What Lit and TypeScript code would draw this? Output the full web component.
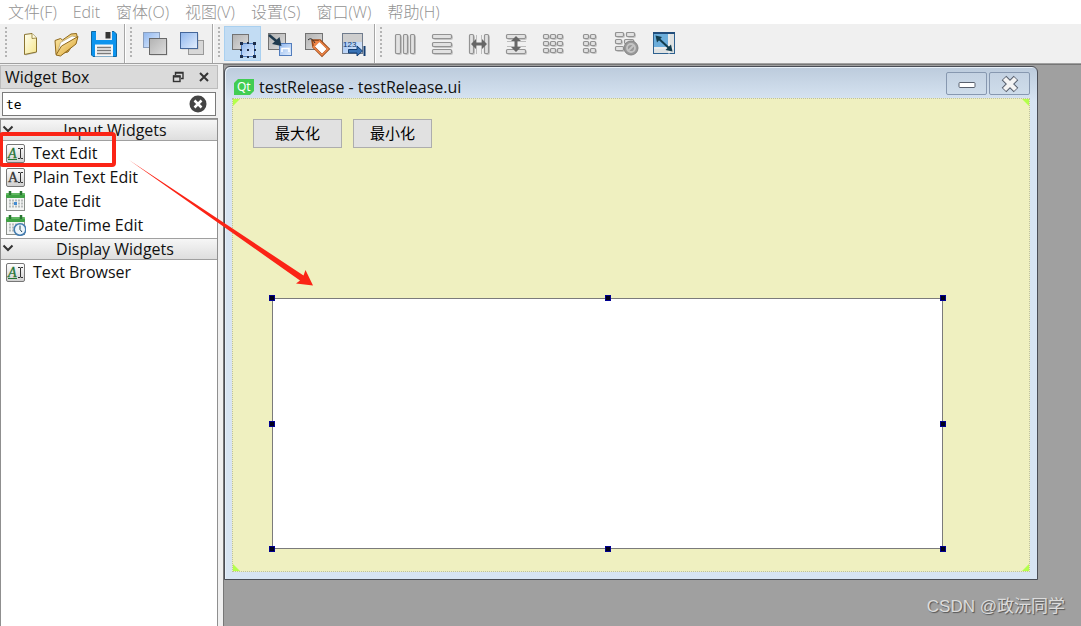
import { LitElement, html, svg, css, TemplateResult } from "lit";
import { customElement, property } from "lit/decorators.js";

const gradients = svg`<defs>
  <linearGradient id="gray" x2="1" y2="1"><stop stop-color="#b2b2b2"/><stop offset="1" stop-color="#dedede"/></linearGradient>
  <linearGradient id="blue" x2="1" y2="1"><stop stop-color="#8fb6ee"/><stop offset="1" stop-color="#e4effd"/></linearGradient>
  <linearGradient id="paper" x2="1" y2="1"><stop stop-color="#fffff0"/><stop offset="1" stop-color="#f5e58c"/></linearGradient>
  <linearGradient id="gold" x2="1" y2="1"><stop stop-color="#fff0b4"/><stop offset="1" stop-color="#d9a02c"/></linearGradient>
</defs>`;

const cells = (list: number[][]) =>
  list.map(([x, y, w, h]) => svg`<rect x=${x + 1} y=${y + 1} width=${w} height=${h} rx="1" fill="none" stroke="#c4c4c4"/>
    <rect x=${x} y=${y} width=${w} height=${h} rx="1" fill="#e2e2e2" stroke="#939393" stroke-width="1.200"/>`);

const grid = (xs: number[], ys: number[]) => cells(ys.flatMap((y) => xs.map((x) => [x, y, 5, 4])));

const ICONS: Record<string, TemplateResult | TemplateResult[]> = {
  new: svg`<path d="M9.500 4.500H17L20.500 8V23L9.500 25.500z" fill="#000" opacity=".2"/>
    <path d="M8.500 4.500L16 3.500L20.500 8V22L8.500 24.500z" fill="url(#paper)" stroke="#8a7430"/>
    <path d="M16 3.500V8.500L20.500 8" fill="#fffce0" stroke="#8a7430" stroke-width=".8"/>`,
  open: svg`<path d="M3 24.500L2 10.500L7.500 8.500L9.500 10L18 4L23.500 3.500L24.500 8L15 22z" fill="url(#gold)" stroke="#8f681c"/>
    <path d="M5 21L7.500 12.500L19 6L24 7L12 20z" fill="#fff" stroke="#b9a97c" stroke-width=".8"/>
    <path d="M3 25L8.500 16L25 6.500L23 14L7.500 26z" fill="url(#gold)" stroke="#8f681c"/>`,
  save: svg`<path d="M1.500 1.500H24L26.500 4V26.500H3L1.500 25z" fill="#0d94ee" stroke="#12679f"/>
    <rect x="6" y="1" width="16" height="9" fill="#eeeef0"/><rect x="15.500" y="2" width="5" height="6.500" fill="#343434"/>
    <rect x="5" y="14.500" width="18" height="12" fill="#f6f6f6"/>
    <path d="M7 17.500H21M7 20.500H21M7 23.500H21" stroke="#7b7b7b" stroke-width="1.500"/>`,
  back: svg`<rect x="2.500" y="2.500" width="16" height="15" fill="url(#blue)" stroke="#8b9fbd"/>
    <rect x="9.500" y="9.500" width="17" height="16" fill="#000" opacity=".15"/>
    <rect x="8.500" y="8.500" width="17" height="16" fill="url(#gray)" stroke="#686868"/>`,
  front: svg`<rect x="10.500" y="10.500" width="15" height="14" fill="#d8d8d8" stroke="#999"/>
    <rect x="3.500" y="3.500" width="17" height="16" fill="#000" opacity=".15"/>
    <rect x="2.500" y="2.500" width="17" height="16" fill="url(#blue)" stroke="#45679a"/>`,
  widgets: svg`<rect x="3.500" y="4.500" width="16" height="15" fill="url(#gray)" stroke="#727272"/>
    <rect x="12.500" y="13.500" width="13" height="13" fill="url(#blue)" stroke="#527dbd"/>
    <path d="M11 12h3v3h-3zM18 12h2v2h-2zM24 12h3v3h-3zM11 19h2v2h-2zM25 19h2v2h-2zM11 25h3v3h-3zM18 26h2v2h-2zM24 25h3v3h-3zM18 19h2v2h-2z" fill="#1d2c49"/>`,
  signals: svg`<rect x="2.500" y="3.500" width="17" height="16" fill="url(#gray)" stroke="#727272"/>
    <rect x="13.500" y="13.500" width="12" height="12" fill="url(#blue)" stroke="#527dbd"/><path d="M16 22V18.500H23V22" fill="none" stroke="#fff" stroke-width="1.500"/>
    <path d="M3 5L11.500 12" stroke="#203b4f" stroke-width="2.600"/><path d="M15.500 16L6 14L13.500 7z" fill="#203b4f"/>`,
  buddies: svg`<rect x="2.500" y="3.500" width="17" height="16" fill="url(#gray)" stroke="#727272"/>
    <path d="M9.500 10.500L10.500 17L19 25.500L25.500 19L17 10.500z" fill="#fff" stroke="#9a4c1c" stroke-width="2.500"/>
    <path d="M10 11L16.500 11L11 17z" fill="#ee8548"/><path d="M10.500 17L16.500 11L25 19L19 25z" fill="none" stroke="#ee8548" stroke-width="1.500"/><path d="M5 10C8 7 10 10 12 13" fill="none" stroke="#333"/>`,
  tabs: svg`<rect x="2.500" y="3.500" width="20" height="20" fill="url(#blue)" stroke="#707c8d"/>
    <rect x="3" y="4" width="19" height="8" fill="#cecece"/><text x="3" y="17" font-family="Liberation Sans" font-size="8" fill="#0b3568">123</text>
    <path d="M8.500 19.500H17V16L22.500 21L17 26V23H8.500z" fill="#3873b7" stroke="#153e72"/><path d="M24.500 16V26" stroke="#153e72" stroke-width="2"/>`,
  horizontal: cells([[4.5, 4.5, 5, 19], [12.5, 4.5, 4, 19], [19.5, 4.5, 4, 19]]),
  vertical: cells([[4.5, 4.5, 19, 4], [4.5, 12.5, 19, 4], [4.5, 19.5, 19, 4]]),
  hsplit: svg`${cells([[4.5, 4.5, 4, 19], [19.5, 4.5, 4, 19]])}<path d="M11.500 5V24M16.500 5V24" stroke="#bbb"/>
    <path d="M6 14L11 9V12.500H17V9L22 14L17 19V15.500H11V19z" fill="#666"/>`,
  vsplit: svg`${cells([[4.5, 4.5, 19, 4], [4.5, 19.5, 19, 4]])}<path d="M5 11.500H24M5 16.500H24" stroke="#bbb"/>
    <path d="M14 6L19 11H15.500V17H19L14 22L9 17H12.500V11H9z" fill="#666"/>`,
  grid: grid([4.5, 11.5, 18.5], [4.5, 11.5, 18.5]),
  form: grid([7.5, 14.5], [4.5, 11.5, 18.5]),
  break: svg`${cells([[2.5, 2.5, 8, 4], [13.5, 2.5, 8, 4], [2.5, 9.5, 6, 4], [11.5, 9.5, 9, 4], [2.5, 16.5, 8, 4]])}
    <circle cx="18" cy="18" r="7" fill="#999" stroke="#858585"/><circle cx="18" cy="18" r="4" fill="none" stroke="#c4c4c4" stroke-width="1.800"/>
    <path d="M15 21L21 15" stroke="#c4c4c4" stroke-width="1.800"/>`,
  adjust: svg`<rect x="3.500" y="3.500" width="21" height="20" fill="#dfe2e2" stroke="#2e618f"/>
    <path d="M4 4H18V17H4z" fill="#6caedb"/><path d="M19 4V24M4 18H24" stroke="#fff" opacity=".7"/><path d="M3 3H25" stroke="#224e7c" stroke-width="2"/>
    <path d="M8 8L20 19" stroke="#123d4e" stroke-width="2"/><path d="M5.500 5.500L12 7L7 12.500zM22.500 21.500L15.500 20L21 14.500z" fill="#123d4e"/>`,
};

const calendar = svg`<rect x="1.500" y="3.500" width="18" height="16" fill="#f3f4f3" stroke="#8b908b"/>
  <path d="M4 9.500H18M4 12.500H18M4 15.500H18" stroke="#b8bcbc" stroke-dasharray="2 1" stroke-width="2"/>
  <rect x="1" y="2" width="19" height="5" rx="1" fill="#3fa244"/><path d="M1 3H20" stroke="#83cf7e"/>
  <path d="M5 0V4M16 0V4" stroke="#287631" stroke-width="2.500"/>`;
const editIcon = (color: string, line: boolean) => svg`<rect x="1.500" y="1.500" width="18" height="18" rx="1.500" fill="url(#tile)" stroke="#777"/>
  <defs><linearGradient id="tile" x2="0" y2="1"><stop stop-color="#fff"/><stop offset="1" stop-color="#cfcfcf"/></linearGradient></defs>
  <text x="3" y="15" font-family="Liberation Serif" font-size="14" font-style=${line ? "italic" : "normal"} fill=${color} stroke=${color} stroke-width=".3">A</text>
  ${line ? svg`<path d="M3 16.500H12" stroke=${color}/>` : ""}
  <path d="M13 5.500H15L15.500 6L16 5.500H18M15.500 6V15M13 15.500H15L15.500 15L16 15.500H18" fill="none" stroke="#333"/>`;
const WIDGET_ICONS: Record<string, TemplateResult> = {
  rich: editIcon("#267434", true),
  plain: editIcon("#333", false),
  date: svg`${calendar}<rect x="9" y="11" width="3" height="3" fill="#448bd2"/>`,
  datetime: svg`${calendar}<circle cx="15" cy="14.500" r="5.800" fill="#edf5fb" stroke="#457db0" stroke-width="1.600"/><path d="M15 10.500V14.500L17 17" fill="none" stroke="#245"/>`,
};

@customElement("tool-group")
class ToolGroup extends LitElement {
  @property({ attribute: false }) tools: string[][] = [];
  @property() active = "";
  static styles = css`
    :host { display: flex; padding: 2px 2px 2px 5px; border-right: 1px solid #a6a6a6; box-shadow: 1px 0 #fff; }
    :host([last]) { flex: 1; border: 0; }
    .grip { width: 2px; margin: 1px 4px 3px 0; background: repeating-linear-gradient(#b4b4b4 0 2px, #f0f0f0 2px 4px); }
    button { width: 37px; height: 35px; padding: 0; border: 0; background: none; display: grid; place-items: center; }
    button.on { background: #c2dcf3; box-shadow: inset 0 0 0 1px #a9d0f0; }
    svg { width: 28px; height: 28px; }
  `;
  render() {
    return html`<span class="grip"></span>${this.tools.map(([id, label]) => html`
      <button class=${id === this.active ? "on" : ""} aria-label=${label}><svg viewBox="0 0 28 28">${gradients}${ICONS[id]}</svg></button>`)}`;
  }
}

@customElement("widget-box")
class WidgetBox extends LitElement {
  groups = [
    { name: "Input Widgets", items: [["rich", "Text Edit"], ["plain", "Plain Text Edit"], ["date", "Date Edit"], ["datetime", "Date/Time Edit"]] },
    { name: "Display Widgets", items: [["rich", "Text Browser"]] },
  ];
  static styles = css`
    :host { display: flex; flex-direction: column; width: 218px; }
    * { box-sizing: border-box; }
    button { font: inherit; color: inherit; background: none; border: 0; padding: 0; }
    .title { height: 24px; display: flex; align-items: center; background: #dadada; border: 1px solid #bcbcbc; padding: 0 5px 0 4px; }
    h2 { font: inherit; margin: 0; flex: 1; }
    .title button { display: grid; width: 16px; height: 16px; margin-left: 10px; }
    .search { display: flex; align-items: center; height: 24px; margin: 3px 2px 2px; border: 1px solid #7a7a7a; background: #fff; padding-right: 8px; }
    input { flex: 1; min-width: 0; border: 0; outline: 0; padding: 0 3px; background: none; font: 13px "DejaVu Sans Mono", monospace; }
    .search button { display: grid; }
    .list { flex: 1; background: #fff; border: 1px solid #8f8f8f; border-bottom: 0; }
    .head { position: relative; display: flex; align-items: center; justify-content: center; width: 100%; height: 22px; padding-left: 12px; background: linear-gradient(#f6f6f6, #dedede); border-top: 1px solid #a0a0a0; border-bottom: 1px solid #a0a0a0; line-height: 20px; }
    .head svg { position: absolute; left: 1px; top: 3px; }
    ul { list-style: none; margin: 0; padding: 0 0 1px; }
    li button { display: flex; align-items: center; gap: 7px; width: 100%; height: 24px; padding-left: 4px; text-align: left; }
  `;
  render() {
    return html`
      <div class="title"><h2>Widget Box</h2>
        <button aria-label="Float"><svg width="16" height="16"><path d="M5.500 6V3.500H13V9.500H11M5 4H13.500" fill="none" stroke="#333" stroke-width="1.400"/><rect x="3.500" y="7" width="6.500" height="5.500" fill="none" stroke="#333" stroke-width="1.400"/><path d="M3 7.500H10.500" stroke="#333" stroke-width="2"/></svg></button>
        <button aria-label="Close"><svg width="16" height="16"><path d="M4 4L12 12M12 4L4 12" stroke="#333" stroke-width="2"/></svg></button>
      </div>
      <div class="search"><input aria-label="Filter" value="te" />
        <button aria-label="Clear"><svg width="18" height="18"><circle cx="9" cy="9" r="8.500" fill="#444"/><path d="M5.500 5.500L12.500 12.500M12.500 5.500L5.500 12.500" stroke="#fff" stroke-width="2.500"/></svg></button>
      </div>
      <div class="list">${this.groups.map((g) => html`
        <button class="head"><svg width="12" height="12"><path d="M1.500 3.500L6 8L10.500 3.500" fill="none" stroke="#333" stroke-width="2"/></svg>${g.name}</button>
        <ul>${g.items.map(([icon, name]) => html`<li><button><svg width="21" height="21">${WIDGET_ICONS[icon]}</svg>${name}</button></li>`)}</ul>`)}
      </div>`;
  }
}

@customElement("form-window")
class FormWindow extends LitElement {
  static styles = css`
    :host { display: flex; flex-direction: column; box-sizing: border-box; border: 1px solid #4a4d55; border-radius: 6px 6px 0 0; padding: 0 7px 7px; background: linear-gradient(#bccbdc, #d7e4f2 34px); box-shadow: inset 1px 1px #e8f0f8; }
    * { box-sizing: border-box; }
    header { display: flex; align-items: center; height: 31px; gap: 5px; padding-left: 2px; }
    header svg { display: block; }
    h1 { flex: 1; margin: 0; font-size: 16px; font-weight: 400; line-height: 20px; padding-top: 8px; }
    .logo { padding-top: 8px; }
    .controls { display: flex; gap: 2px; padding-top: 2px; }
    .controls button { width: 41px; height: 23px; padding: 0; display: grid; place-items: center; background: linear-gradient(#c4d2e2, #cedcea); border: 1px solid #8798b0; border-radius: 2px; }
    .canvas { position: relative; flex: 1; background: #eff0c0; border: 1px dotted #bdc0a0; }
    .corner { position: absolute; width: 7px; height: 7px; background: #b4ff4b; }
    .tl { top: 0; left: 0; clip-path: polygon(0 0, 100% 0, 0 100%); }
    .tr { top: 0; right: 0; clip-path: polygon(0 0, 100% 0, 100% 100%); }
    .br { bottom: 0; right: 0; clip-path: polygon(100% 0, 100% 100%, 0 100%); }
    .bl { bottom: 0; left: 0; clip-path: polygon(0 0, 100% 100%, 0 100%); }
    .actions { display: flex; gap: 11px; padding: 20px; }
    .actions button { height: 29px; padding: 0 16px 2px; background: #e1e1e1; border: 1px solid #adadad; color: #000; font: 15px "Noto Sans CJK SC", sans-serif; }
    .actions button:first-child { padding: 0 21px 2px; }
    .selection { position: absolute; left: 39px; right: 86px; top: 199px; bottom: 22px; }
    textarea { display: block; width: 100%; height: 100%; resize: none; border: 1px solid #7b7b7b; background: #fff; outline: 0; }
    .handle { position: absolute; width: 6px; height: 6px; margin: -3px; background: #00001e; border: 1px solid #000090; }
    .x0 { left: 0; } .x1 { left: 50%; } .x2 { left: 100%; }
    .y0 { top: 0; } .y1 { top: 50%; } .y2 { top: 100%; }
  `;
  render() {
    return html`
      <header>
        <span class="logo"><svg width="20" height="16"><path d="M4 0H20V12L16 16H0V4z" fill="#41cd52"/><text x="3" y="12" font-family="Noto Sans" font-size="12" fill="#fff">Qt</text></svg></span>
        <h1>testRelease - testRelease.ui</h1>
        <div class="controls">
          <button aria-label="Minimize"><svg width="20" height="18"><rect x="2" y="7.500" width="16" height="5" rx="1" fill="#fff" stroke="#58606e"/></svg></button>
          <button aria-label="Close"><svg width="20" height="18"><path d="M4 3L16 15M16 3L4 15" stroke="#58606e" stroke-width="6.500"/><path d="M4.500 3.500L15.500 14.500M15.500 3.500L4.500 14.500" stroke="#f4f4f4" stroke-width="4.400"/></svg></button>
        </div>
      </header>
      <div class="canvas">
        ${["tl", "tr", "br", "bl"].map((c) => html`<i class="corner ${c}"></i>`)}
        <div class="actions"><button>最大化</button><button>最小化</button></div>
        <div class="selection"><textarea aria-label="Text Edit"></textarea>
          ${["x0 y0", "x1 y0", "x2 y0", "x0 y1", "x2 y1", "x0 y2", "x1 y2", "x2 y2"].map((p) => html`<i class="handle ${p}"></i>`)}
        </div>
      </div>`;
  }
}

@customElement("app-root")
class AppRoot extends LitElement {
  menus = ["文件(F)", "Edit", "窗体(O)", "视图(V)", "设置(S)", "窗口(W)", "帮助(H)"];
  static styles = css`
    :host { display: flex; flex-direction: column; position: relative; height: 100vh; overflow: hidden; background: #f0f0f0; color: #111; font: 16px/20px "Open Sans", "Noto Sans CJK SC", sans-serif; }
    .menu { display: flex; height: 24px; background: #fff; }
    .menu button { border: 0; background: none; padding: 0 8px; color: #929292; font: 300 16px/22px "Open Sans", "Noto Sans CJK SC", sans-serif; }
    .tools { display: flex; height: 39px; border-bottom: 1px solid #a0a0a0; }
    .main { display: flex; flex: 1; gap: 5px; padding-top: 1px; min-height: 0; }
    .workspace { position: relative; flex: 1; background: #a0a0a0; border-left: 1px solid #777; border-top: 1px solid #777; margin-top: -1px; }
    form-window { position: absolute; inset: 1px 43px 46px 0; }
    .mark { position: absolute; right: 16px; bottom: 8px; font-family: "Liberation Sans", "Noto Sans CJK SC", sans-serif; font-size: 17px; line-height: 22px; color: #dcdcdc; text-shadow: 1px 1px 1px #555; }
    .note { position: absolute; left: 0; top: 0; width: 330px; height: 300px; pointer-events: none; }
  `;
  render() {
    return html`
      <nav class="menu">${this.menus.map((m) => html`<button>${m}</button>`)}</nav>
      <div class="tools">
        <tool-group .tools=${[["new", "New"], ["open", "Open"], ["save", "Save"]]}></tool-group>
        <tool-group .tools=${[["back", "Send to Back"], ["front", "Bring to Front"]]}></tool-group>
        <tool-group active="widgets" .tools=${[["widgets", "Edit Widgets"], ["signals", "Edit Signals/Slots"], ["buddies", "Edit Buddies"], ["tabs", "Edit Tab Order"]]}></tool-group>
        <tool-group last .tools=${[["horizontal", "Lay Out Horizontally"], ["vertical", "Lay Out Vertically"], ["hsplit", "Horizontal Splitter"], ["vsplit", "Vertical Splitter"], ["grid", "Lay Out in a Grid"], ["form", "Lay Out in a Form"], ["break", "Break Layout"], ["adjust", "Adjust Size"]]}></tool-group>
      </div>
      <div class="main">
        <widget-box></widget-box>
        <div class="workspace"><form-window></form-window><div class="mark">CSDN @政沅同学</div></div>
      </div>
      <svg class="note" viewBox="0 0 330 300">
        <rect x="1" y="134" width="113" height="31" rx="2" fill="none" stroke="#fb2416" stroke-width="4"/>
        <path d="M129 160L303.500 275.500L305.500 270L313 285.500L296 283.500L300 280.500z" fill="#fb2416"/>
      </svg>`;
  }
}
